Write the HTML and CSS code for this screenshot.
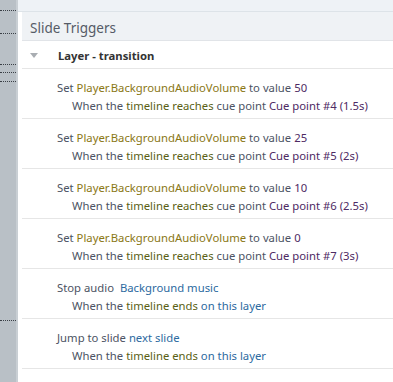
FILE: index.html
```html
<!DOCTYPE html>
<html lang="en">
<head>
  <meta charset="UTF-8">
  <title>Slide Triggers</title>
  <link rel="stylesheet" href="styles.css">
</head>
<body>
  <div class="gutter">
    <div class="dots" style="height: 11px"></div>
    <div class="dots" style="height: 23px"></div>
    <div class="dots" style="height: 31px"></div>
    <div class="dots" style="height: 8px"></div>
    <div class="dots" style="height: 9px"></div>
    <div class="dots" style="height: 239px"></div>
  </div>

  <div class="panel">
    <div class="topstrip"></div>

    <div class="inner">
      <div class="header">Slide Triggers</div>

      <div class="layer-row">
        <span class="caret"></span>
        <span class="layer-name">Layer - transition</span>
      </div>

      <!-- triggers -->
      <div class="trigger">
        <div class="line">Set <span class="var">Player.BackgroundAudioVolume</span> to value <span class="val">50</span></div>
        <div class="cond">When the <span class="kw">timeline</span> <span class="kw">reaches</span> cue point <span class="val">Cue point #4 (1.5s)</span></div>
      </div>
      <div class="trigger">
        <div class="line">Set <span class="var">Player.BackgroundAudioVolume</span> to value <span class="val">25</span></div>
        <div class="cond">When the <span class="kw">timeline</span> <span class="kw">reaches</span> cue point <span class="val">Cue point #5 (2s)</span></div>
      </div>
      <div class="trigger">
        <div class="line">Set <span class="var">Player.BackgroundAudioVolume</span> to value <span class="val">10</span></div>
        <div class="cond">When the <span class="kw">timeline</span> <span class="kw">reaches</span> cue point <span class="val">Cue point #6 (2.5s)</span></div>
      </div>
      <div class="trigger">
        <div class="line">Set <span class="var">Player.BackgroundAudioVolume</span> to value <span class="val">0</span></div>
        <div class="cond">When the <span class="kw">timeline</span> <span class="kw">reaches</span> cue point <span class="val">Cue point #7 (3s)</span></div>
      </div>
      <div class="trigger">
        <div class="line">Stop audio &nbsp;<span class="link">Background music</span></div>
        <div class="cond">When the <span class="kw">timeline</span> <span class="kw">ends</span> <span class="link">on this layer</span></div>
      </div>
      <div class="trigger">
        <div class="line">Jump to slide <span class="link">next slide</span></div>
        <div class="cond">When the <span class="kw">timeline</span> <span class="kw">ends</span> <span class="link">on this layer</span></div>
      </div>
    </div>
  </div>
</body>
</html>
```

FILE: styles.css
```css
body {
  margin: 0;
  display: flex;
  height: 382px;
  overflow: hidden;
  font-family: "Noto Sans", sans-serif;
  font-size: 11.3px;
  background: #fff;
}

.gutter {
  width: 16px;
  flex-shrink: 0;
  background: #b9c0c6;
  border-right: 2px solid #c9cfd4;
}

.dots {
  border-bottom: 1px dotted #3a3f45;
  box-sizing: border-box;
}

.panel {
  flex: 1;
  display: flex;
  flex-direction: column;
}

.topstrip {
  height: 11px;
  background: #eef2f6;
  border-bottom: 1px solid #dde3e8;
}

.inner {
  padding-left: 4px;
}

.header {
  height: 29px;
  line-height: 24px;
  padding-left: 8px;
  padding-top: 4px;
  box-sizing: border-box;
  background: #eff2f5;
  border-bottom: 1px solid #e1e4e8;
  font-size: 13.5px;
  color: #555b66;
}

.layer-row {
  height: 28px;
  padding-top: 1px;
  box-sizing: border-box;
  display: flex;
  align-items: center;
  border-bottom: 1px solid #e6e6e6;
}

.caret {
  width: 0;
  height: 0;
  margin-left: 8px;
  margin-right: 20px;
  border-left: 4px solid transparent;
  border-right: 4px solid transparent;
  border-top: 5px solid #a9adb2;
}

.layer-name {
  font-weight: bold;
  font-size: 11.3px;
  color: #333;
}

.trigger {
  height: 50px;
  border-bottom: 1px solid #e6e6e6;
  padding-left: 35px;
  padding-top: 10px;
  box-sizing: border-box;
  color: #4c5363;
  line-height: 18px;
}

.cond {
  padding-left: 15px;
}

.var {
  color: #8a7714;
}

.val {
  color: #4e2a63;
}

.kw {
  color: #5a5f14;
}

.link {
  color: #2d6aa0;
}
```
